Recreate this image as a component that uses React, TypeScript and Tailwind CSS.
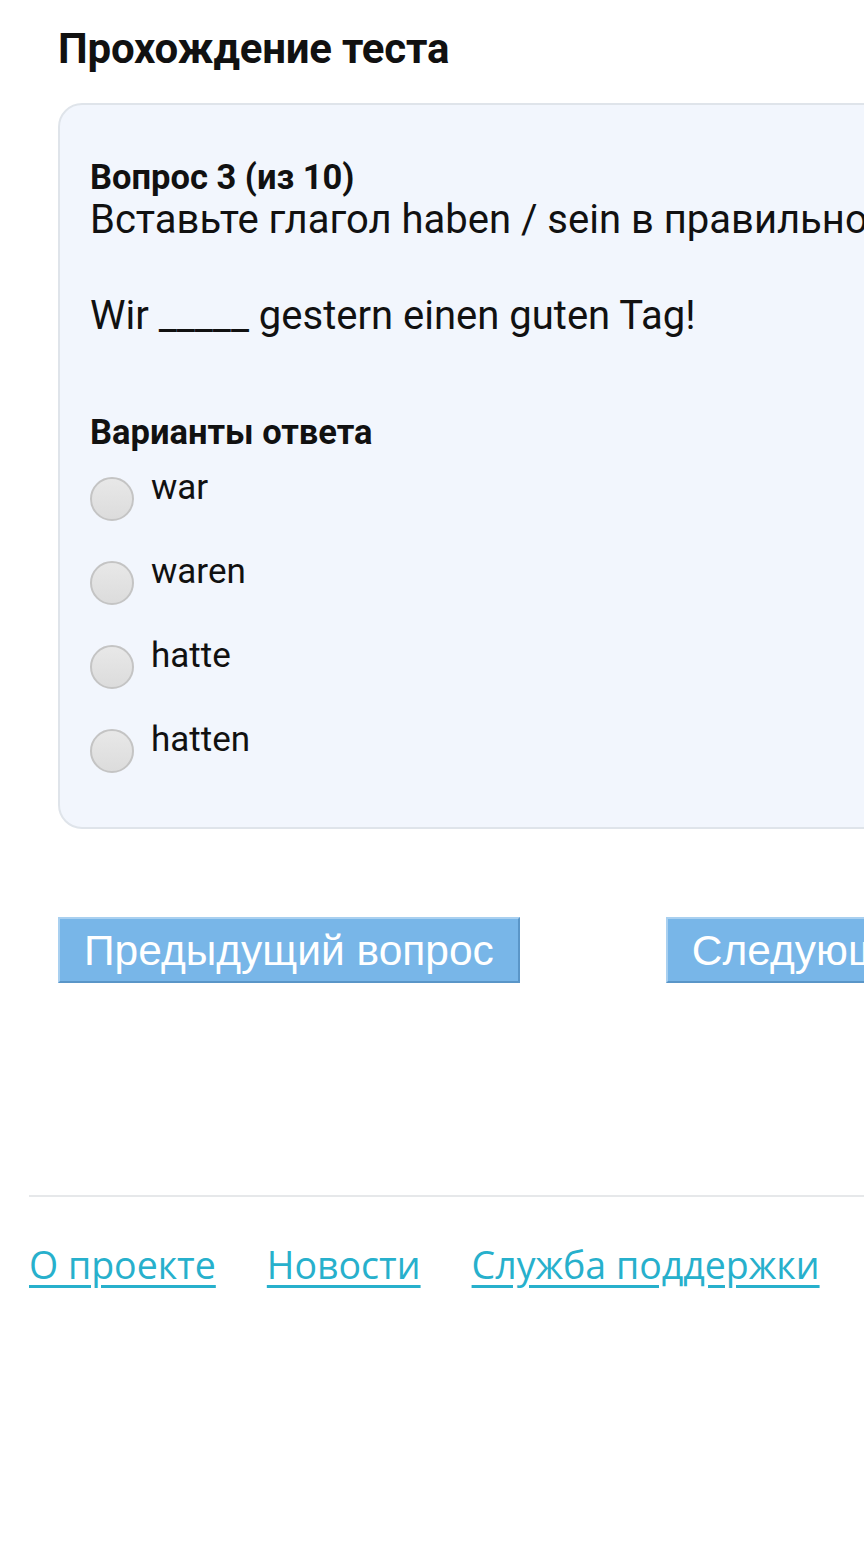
import { useState } from 'react';

const OPTIONS = ['war', 'waren', 'hatte', 'hatten'];

export default function App() {
  const [picked, setPicked] = useState<number | null>(null);

  return (
    <div className="min-h-[1564px] w-[864px] overflow-hidden bg-white font-['Roboto',sans-serif] text-[#111]">
      <div className="pl-[58px] pt-[24px]">
        <h1 className="text-[42px] font-bold leading-[50px] tracking-[-0.2px]">Прохождение теста</h1>

        <div className="mt-[29px] w-[1100px] rounded-[24px] border-2 border-[#dfe4ea] bg-[#f2f6fd] pb-[65px] pl-[30px] pt-[51px]">
          <div className="text-[34.5px] font-bold leading-[42px]">Вопрос 3 (из 10)</div>
          <div className="whitespace-nowrap text-[40px] leading-[44px]">
            Вставьте глагол haben / sein в правильной форме:
          </div>
          <div className="mt-[52px] whitespace-nowrap text-[40px] leading-[44px]">Wir _____ gestern einen guten Tag!</div>

          <div className="mt-[73px] text-[34.5px] font-bold leading-[42px]">Варианты ответа</div>
          <div className="mt-[13px] flex flex-col gap-[40px]">
            {OPTIONS.map((o, i) => (
              <label key={o} className="flex h-[44px] cursor-pointer items-start gap-[17px]" onClick={() => setPicked(i)}>
                <span
                  className={`mt-[11px] h-[44px] w-[44px] shrink-0 rounded-full border-2 border-[#c4c4c4] ${
                    picked === i ? 'bg-[#78b4e4]' : 'bg-gradient-to-b from-[#e8e8e8] to-[#dcdcdc]'
                  }`}
                />
                <span className="text-[35px] leading-[44px]">{o}</span>
              </label>
            ))}
          </div>
        </div>

        <div className="mt-[88px] flex gap-[146px] whitespace-nowrap font-['Liberation_Sans',Arial,sans-serif]">
          <button
            type="button"
            className="h-[66px] shrink-0 border-2 border-b-[#5a96c8] border-l-[#a9d0f0] border-r-[#5a96c8] border-t-[#a9d0f0] bg-[#78b6e8] px-[24px] text-[42.5px] text-white"
          >
            Предыдущий вопрос
          </button>
          <button
            type="button"
            className="h-[66px] shrink-0 border-2 border-b-[#5a96c8] border-l-[#a9d0f0] border-r-[#5a96c8] border-t-[#a9d0f0] bg-[#78b6e8] px-[24px] text-[42.5px] text-white"
          >
            Следующий вопрос
          </button>
        </div>
      </div>

      <div className="ml-[29px] mt-[212px] h-[2px] bg-[#e6e8ea]" />

      <div className="ml-[29px] mt-[45px] flex gap-[51px] font-['Open_Sans',sans-serif] text-[37.5px] leading-[46px] text-[#27b0cc]">
        <a href="#" className="underline underline-offset-[6px]">О проекте</a>
        <a href="#" className="underline underline-offset-[6px]">Новости</a>
        <a href="#" className="underline underline-offset-[6px]">Служба поддержки</a>
      </div>
    </div>
  );
}
